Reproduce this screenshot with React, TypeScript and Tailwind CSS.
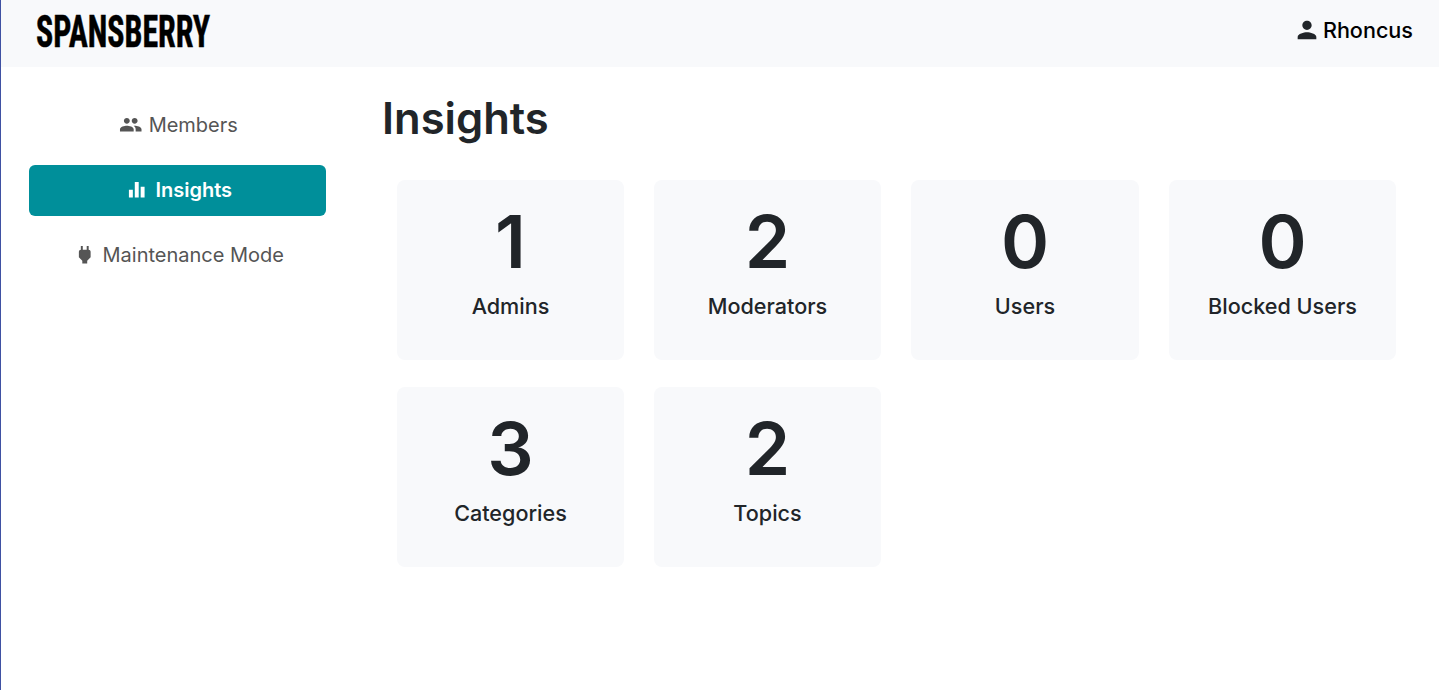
import React from "react";
import { MdPerson, MdEqualizer, MdPeople, MdPower } from "react-icons/md";

const stats: [string, string][] = [
  ["1", "Admins"],
  ["2", "Moderators"],
  ["0", "Users"],
  ["0", "Blocked Users"],
  ["3", "Categories"],
  ["2", "Topics"],
];

export default function App() {
  return (
    <div className="h-[690px] overflow-hidden border-l border-[#3f51a3] bg-white font-['Inter',sans-serif] text-[#212529]">
      <header className="flex h-[67px] items-start justify-between bg-[#f8f9fb] pl-[35px] pr-[26px]">
        <div className="h-[67px] w-[176px] pt-[3px]">
          <svg width="176" height="56" className="overflow-visible">
            <text x="0" y="43.6" textLength="174" lengthAdjust="spacingAndGlyphs" fontFamily="Roboto" fontWeight="700" fontStretch="75%" fontSize="44.5" fill="#000" stroke="#000" strokeWidth="0.5">SPANSBERRY</text>
          </svg>
        </div>
        <div className="flex items-center pt-[13px] text-[21.6px] font-medium leading-[34px] text-black">
          <MdPerson className="mb-px mr-[2px] size-[28px] text-[#212529]" />
          Rhoncus
        </div>
      </header>
      <div className="flex">
        <nav className="flex w-[325px] flex-col gap-[14px] pl-[28px] pt-[33px] text-[20px] text-[#555]">
          <a className="flex h-[51px] items-center justify-center pb-px pl-[2px]"><MdPeople className="mr-1.5 size-[23.5px]" />Members</a>
          <a className="flex h-[51px] items-center justify-center rounded-[6px] bg-[#008f9a] pb-px pl-[2px] font-semibold text-white"><MdEqualizer className="mr-[7px] size-[23.5px]" />Insights</a>
          <a className="flex h-[51px] items-center justify-center pb-px pl-[2px]"><MdPower className="mr-1.5 size-[23.5px]" />Maintenance Mode</a>
        </nav>
        <main className="pl-[56px] pt-[24px]">
          <h1 className="text-[43.5px] font-semibold leading-[54px]">Insights</h1>
          <div className="ml-[15px] mt-[35px] grid grid-cols-[227px_227px_228px_227px] gap-x-[30px] gap-y-[27px]">
            {stats.map(([n, label]) => (
              <div key={label} className="flex h-[180px] flex-col items-center rounded-[8px] bg-[#f8f9fb] pt-[18px]">
                <div className="text-[73px] font-semibold leading-[88px]">{n}</div>
                <div className="text-[21.6px] font-medium leading-[40px]">{label}</div>
              </div>
            ))}
          </div>
        </main>
      </div>
    </div>
  );
}
